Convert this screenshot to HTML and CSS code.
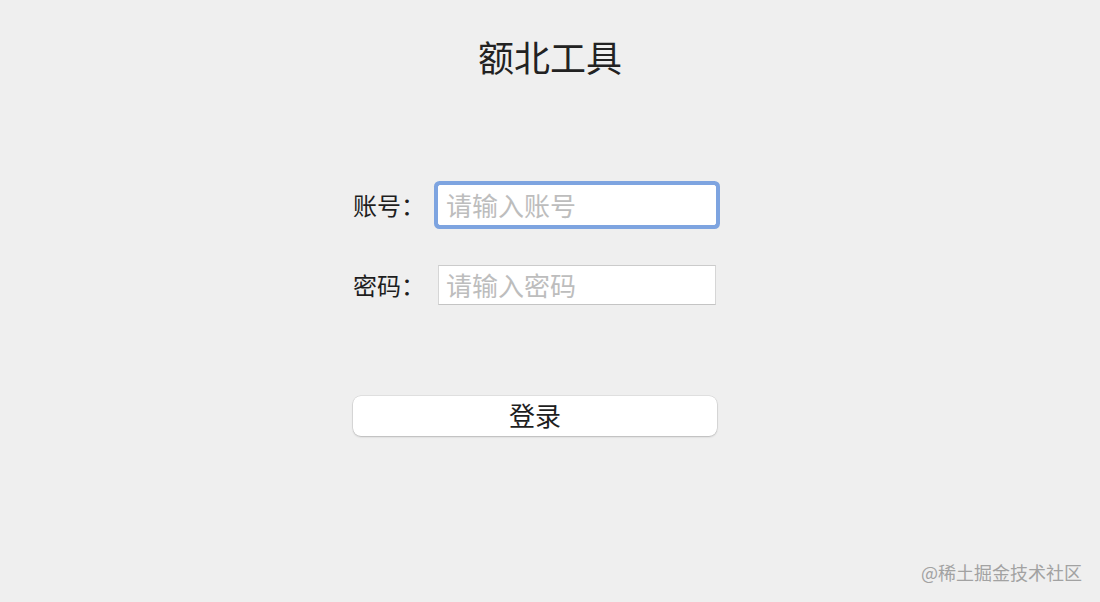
FILE: index.html
```html
<!DOCTYPE html>
<html lang="zh">
<head>
<meta charset="utf-8">
<title>额北工具</title>
<link rel="stylesheet" href="styles.css">
</head>
<body>
<main class="page">
  <h1 class="title">额北工具</h1>
  <form class="form">
    <div class="row">
      <label class="label" for="acc">账号：</label>
      <input class="input focused" id="acc" type="text" placeholder="请输入账号">
    </div>
    <div class="row">
      <label class="label" for="pwd">密码：</label>
      <input class="input" id="pwd" type="password" placeholder="请输入密码">
    </div>
    <button class="btn" type="button">登录</button>
  </form>
</main>
<div class="watermark">@稀土掘金技术社区</div>
</body>
</html>
```

FILE: styles.css
```css
html, body {
  margin: 0;
  padding: 0;
  width: 1100px;
  height: 602px;
  overflow: hidden;
}
body {
  background: #efefef;
  font-family: "Noto Sans CJK SC", "Noto Sans", sans-serif;
  color: #1e1e1e;
  position: relative;
}
.page {
  display: flex;
  flex-direction: column;
  padding-top: 38px;
}
.title {
  margin: 0;
  font-size: 36px;
  line-height: 36px;
  font-weight: 400;
  text-align: center;
  color: #222;
}
.form {
  margin: 111px 0 0 353px;
  width: 364px;
  display: flex;
  flex-direction: column;
  gap: 40px;
}
.row {
  display: flex;
  align-items: center;
  height: 40px;
}
.label {
  width: 85px;
  font-size: 24px;
  line-height: 38px;
  color: #1e1e1e;
}
.input {
  box-sizing: border-box;
  width: 278px;
  height: 40px;
  margin: 0;
  padding: 0 0 2px 7px;
  border: 1px solid #d6d6d6;
  border-top-color: #cbcbcb;
  border-bottom-color: #c4c4c4;
  border-radius: 0;
  background: #fff;
  font-family: "Noto Sans CJK SC", sans-serif;
  font-size: 26px;
  color: #222;
  outline: none;
}
.input::placeholder {
  color: #bdbdbd;
}
.input.focused {
  border-color: #fff;
  border-radius: 2px;
  box-shadow: 0 0 0 4px #7ea4e0;
}
.btn {
  margin-top: 51px;
  box-sizing: border-box;
  width: 364px;
  height: 40px;
  background: #fff;
  border: none;
  border-radius: 8px;
  box-shadow: 0 0 0 0.5px rgba(0,0,0,0.12), 0 1px 2px rgba(0,0,0,0.18);
  font-family: "Noto Sans CJK SC", sans-serif;
  font-size: 26px;
  line-height: 36px;
  color: #1e1e1e;
  padding: 0 0 2px;
}
.watermark {
  position: absolute;
  right: 18px;
  bottom: 18px;
  font-size: 18px;
  line-height: 24px;
  color: #a2a2a2;
}
```
